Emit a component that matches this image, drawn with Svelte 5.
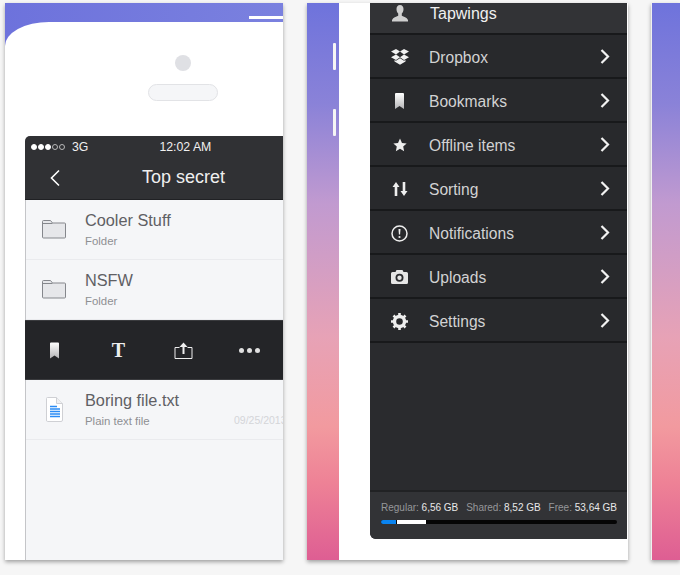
<script lang="ts">
  const files = [
    { name: "Cooler Stuff", kind: "Folder" },
    { name: "NSFW", kind: "Folder" }
  ];

  const menu = ["Dropbox", "Bookmarks", "Offline items", "Sorting", "Notifications", "Uploads", "Settings"];
</script>

{#snippet folder()}
  <svg class="row-icon" width="26" height="22" viewBox="0 0 26 22">
    <path d="M1.500 5V3.500q0-1 1-1h7l2 2.500h12q1 0 1 1v13q0 1-1 1h-21q-1 0-1-1z" fill="#e6e7ea" stroke="#85878c" stroke-width="1"/>
    <path d="M1.500 5.500h10" stroke="#85878c" fill="none"/>
  </svg>
{/snippet}

{#snippet bookmark(w, h)}
  <svg width={w} height={h} viewBox="0 0 9 16">
    <defs>
      <linearGradient id="bm" x1="0" y1="0" x2="0" y2="1">
        <stop offset="0" stop-color="#ffffff"/>
        <stop offset="1" stop-color="#b4b4b6"/>
      </linearGradient>
    </defs>
    <path d="M0 1q0-1 1-1h7q1 0 1 1v15l-4.500-3-4.500 3z" fill="url(#bm)"/>
  </svg>
{/snippet}

{#snippet menuIcon(name)}
  {#if name === "Dropbox"}
    <svg width="18" height="16" viewBox="0 0 18 16" fill="#f1f1f1">
      <path d="M5 0l4 2.600-4 2.800-5-3zM13 0l5 2.400-5 3-4-2.800zM0 8.200l5-2.800 4 2.800-4 2.700zM18 8.200l-5 2.700-4-2.700 4-2.800zM5 11.800l4-2.500 4 2.500 1.500-.8v1.400L9 15.800l-5.500-3.400V11z"/>
    </svg>
  {:else if name === "Bookmarks"}
    {@render bookmark(9, 16)}
  {:else if name === "Offline items"}
    <svg width="14" height="14" viewBox="0 0 24 24" fill="#eeeeee">
      <path d="M12 1l3.400 7.400 8 .9-5.900 5.400 1.600 7.900-7.100-4-7.100 4 1.600-7.900L.6 9.300l8-.9z"/>
    </svg>
  {:else if name === "Sorting"}
    <svg width="16" height="14" viewBox="0 0 16 14" fill="#eeeeee">
      <path d="M4 0l3.500 5H5.300v9H2.700V5H.500zM12 14l-3.500-5h2.200V0h2.600v9h2.200z"/>
    </svg>
  {:else if name === "Notifications"}
    <svg width="17" height="17" viewBox="0 0 17 17">
      <circle cx="8.500" cy="8.500" r="7.500" fill="none" stroke="#eeeeee" stroke-width="1.500"/>
      <path d="M7.500 4h2l-.4 5.500H7.900z" fill="#eeeeee"/>
      <circle cx="8.500" cy="12" r="1.100" fill="#eeeeee"/>
    </svg>
  {:else if name === "Uploads"}
    <svg width="17" height="14" viewBox="0 0 17 14">
      <path d="M1.500 2h3l1-2h6l1 2h3q1.500 0 1.500 1.500V12.500Q17 14 15.500 14h-14Q0 14 0 12.500V3.500Q0 2 1.500 2z" fill="#e6e6e6"/>
      <circle cx="8.500" cy="7.700" r="4" fill="#2a2b2e"/>
      <circle cx="8.500" cy="7.700" r="2.200" fill="#e6e6e6"/>
    </svg>
  {:else}
    <svg width="17" height="17" viewBox="0 0 17 17">
      <circle cx="8.500" cy="8.500" r="5" fill="none" stroke="#eeeeee" stroke-width="3.400"/>
      <path d="M8.500 0v17M0 8.500h17M2.500 2.500l12 12M14.500 2.500l-12 12" stroke="#eeeeee" stroke-width="2.600" stroke-dasharray="2.600 11.800 2.600"/>
    </svg>
  {/if}
{/snippet}

<div class="shots">
  <section class="card first">
    <div class="notch"><span class="notch-bar"></span></div>
    <div class="phone">
      <div class="earpiece">
        <span class="camera"></span>
        <span class="speaker"></span>
      </div>
      <div class="screen">
        <div class="topbar">
          <div class="status">
            <span class="signal">
              <i class="on"></i><i class="on"></i><i class="on"></i><i></i><i></i>
            </span>
            <span class="net">3G</span>
            <span class="clock">12:02 AM</span>
          </div>
          <div class="nav">
            <svg class="back" width="12" height="18" viewBox="0 0 12 18">
              <path d="M10 1.500L2.500 9l7.500 7.500" fill="none" stroke="#ffffff" stroke-width="1.600"/>
            </svg>
            <span class="title">Top secret</span>
          </div>
        </div>

        {#each files as file}
          <div class="row">
            {@render folder()}
            <div class="row-text">
              <span class="row-name">{file.name}</span>
              <span class="row-kind">{file.kind}</span>
            </div>
          </div>
        {/each}

        <div class="actions">
          <span class="action">{@render bookmark(9, 17)}</span>
          <span class="action serif">T</span>
          <span class="action">
            <svg width="19" height="17" viewBox="0 0 19 17" fill="none" stroke="#eeeeee">
              <path d="M5.500 5.500H1v11h17v-11h-4.500" stroke-width="1"/>
              <path d="M9.500 12V2" stroke-width="2"/>
              <path d="M5.500 5l4-4.500 4 4.500z" fill="#eeeeee" stroke="none"/>
            </svg>
          </span>
          <span class="action dots"><i></i><i></i><i></i></span>
        </div>

        <div class="row file">
          <svg class="doc" width="17" height="25" viewBox="0 0 17 25">
            <path d="M1.500.500h9l6 6v16.500q0 1.500-1.500 1.500H1.500Q.500 24.500.500 23V1.500q0-1 1-1z" fill="#ffffff" stroke="#cfd0d4"/>
            <path d="M10.500.500v6h6" fill="#f0f0f2" stroke="#cfd0d4"/>
            <path d="M4 9.500h7M4 12h10M4 14.500h10M4 17h10M4 19.500h10" stroke="#2b8cf5" stroke-width="1.300"/>
          </svg>
          <div class="row-text">
            <span class="row-name">Boring file.txt</span>
            <span class="row-kind">Plain text file</span>
          </div>
          <span class="row-date">09/25/2013</span>
        </div>
      </div>
    </div>
  </section>

  <section class="card second">
    <div class="strip">
      <span class="side-btn"></span>
      <span class="side-btn"></span>
    </div>
    <div class="body">
      <div class="panel">
        <div class="user">
          <span class="menu-icon">
            <svg width="16" height="17" viewBox="0 0 16 17">
              <path d="M8 0c2.300 0 3.500 1.700 3.500 4 0 2-.8 3.600-1.700 4.500v2.300c2 .8 5 1.700 6.200 4.200v1.500H0V15c1.200-2.500 4.200-3.400 6.200-4.200V8.500C5.300 7.600 4.500 6 4.500 4 4.500 1.700 5.700 0 8 0z" fill="#cfcfcf"/>
            </svg>
          </span>
          <span class="user-name">Tapwings</span>
        </div>

        <div class="menu">
          {#each menu as item}
            <div class="menu-row">
              <span class="menu-icon">{@render menuIcon(item)}</span>
              <span class="menu-label">{item}</span>
              <svg class="chevron" width="10" height="15" viewBox="0 0 10 15">
                <path d="M1.500 1l6.500 6.500-6.500 6.500" fill="none" stroke="#f2f2f2" stroke-width="2.200"/>
              </svg>
            </div>
          {/each}
        </div>

        <div class="storage">
          <div class="storage-text">
            <span>Regular: <b>6,56 GB</b></span>
            <span>Shared: <b>8,52 GB</b></span>
            <span>Free: <b>53,64 GB</b></span>
          </div>
          <div class="bar">
            <span class="bar-regular"></span>
            <span class="bar-shared"></span>
          </div>
        </div>
      </div>
    </div>
  </section>

  <section class="card third">
    <div class="strip"></div>
  </section>
</div>

<style>
  :global(body) {
    margin: 0;
    background: #f6f6f6;
  }
  .shots {
    display: flex;
    gap: 24px;
    width: 680px;
    height: 575px;
    box-sizing: border-box;
    padding: 3px 0 0 5px;
    overflow: hidden;
    font-family: "Liberation Sans", Arial, sans-serif;
  }
  .card {
    position: relative;
    flex: none;
    height: 557px;
    background: #ffffff;
    box-shadow: 0 2px 4px rgba(0, 0, 0, 0.35);
  }

  /* first screenshot */
  .first {
    display: flex;
    flex-direction: column;
    width: 278px;
    background: linear-gradient(100deg, #6d72dc, #7f86e0);
  }
  .notch {
    display: flex;
    justify-content: flex-end;
    align-items: flex-end;
    height: 16px;
    flex: none;
  }
  .notch-bar {
    width: 34px;
    height: 3px;
    background: #ffffff;
  }
  .phone {
    flex: 1;
    min-height: 0;
    margin-top: 3px;
    display: flex;
    flex-direction: column;
    background: #ffffff;
    border-top-left-radius: 44px 24px;
    padding-left: 20px;
    box-sizing: border-box;
  }
  .earpiece {
    display: flex;
    flex-direction: column;
    align-items: center;
    gap: 13px;
    padding: 33px 0 0 77px;
    height: 114px;
    box-sizing: border-box;
    width: 278px;
    margin-left: -20px;
    flex: none;
  }
  .camera {
    width: 16px;
    height: 16px;
    border-radius: 50%;
    background: #dfe0e4;
  }
  .speaker {
    width: 70px;
    height: 17px;
    box-sizing: border-box;
    border: 1px solid #e2e3e6;
    border-radius: 9px;
    background: #f5f6f8;
  }
  .screen {
    flex: 1;
    display: flex;
    flex-direction: column;
    background: #f5f6f8;
    border-left: 1px solid #c4c5c8;
    border-top-left-radius: 6px;
    min-height: 0;
  }
  .topbar {
    background: #303134;
    border-top-left-radius: 5px;
    border-bottom: 1px solid #202124;
    height: 63px;
    margin-left: -1px;
    flex: none;
    color: #ffffff;
  }
  .status {
    display: flex;
    align-items: center;
    height: 21px;
    padding-left: 6px;
    font-size: 12.300px;
    color: #f0f0f0;
  }
  .signal {
    display: flex;
    gap: 1px;
  }
  .signal i {
    width: 6px;
    height: 6px;
    box-sizing: border-box;
    border: 1px solid #b8b8b8;
    border-radius: 50%;
  }
  .signal i.on {
    background: #ffffff;
    border-color: #ffffff;
  }
  .net {
    margin-left: 7px;
  }
  .clock {
    margin-left: 71px;
  }
  .nav {
    display: flex;
    align-items: center;
    height: 37px;
    padding-left: 24px;
    margin-top: 2px;
  }
  .back {
    flex: none;
  }
  .title {
    margin-left: 81px;
    font-size: 18px;
    color: #efefef;
  }
  .row {
    display: flex;
    align-items: center;
    height: 60px;
    box-sizing: border-box;
    border-bottom: 1px solid #eaebee;
    padding-left: 16px;
    flex: none;
    position: relative;
    overflow: hidden;
  }
  .row-icon {
    flex: none;
    margin: -2px 18px 0 -1px;
  }
  .row-text {
    display: flex;
    flex-direction: column;
    gap: 4px;
  }
  .row-name {
    font-size: 16.300px;
    line-height: 19px;
    color: #5f6064;
  }
  .row-kind {
    font-size: 11.400px;
    line-height: 14px;
    color: #8e8f93;
  }
  .actions {
    display: flex;
    align-items: center;
    height: 60px;
    flex: none;
    margin-left: -1px;
    background: #242528;
    border-top: 1px solid #3a3b3e;
    border-bottom: 1px solid #3a3b3e;
    box-sizing: border-box;
  }
  .action {
    display: flex;
    justify-content: center;
    align-items: center;
    width: 65px;
    flex: none;
  }
  .action:first-child {
    width: 58px;
  }
  .serif {
    font-family: "Liberation Serif", serif;
    font-weight: 700;
    font-size: 20px;
    color: #eeeeee;
    margin-left: 3px;
  }
  .dots {
    gap: 3px;
    margin-left: 1px;
  }
  .dots i {
    width: 5px;
    height: 5px;
    border-radius: 50%;
    background: #e0e0e0;
  }
  .file {
    padding-left: 20px;
  }
  .doc {
    flex: none;
    margin: 0 22px 0 0;
  }
  .row-date {
    position: absolute;
    left: 208px;
    top: 34px;
    font-size: 10.500px;
    color: #d4d5d8;
    white-space: nowrap;
  }

  /* second screenshot */
  .second {
    display: flex;
    width: 321px;
  }
  .strip {
    flex: none;
    width: 32px;
    height: 100%;
    background: linear-gradient(180deg, #6e73dc 0%, #8a82d8 18%, #c19ad0 36%, #e7a2b6 60%, #f29a9f 76%, #ee8296 86%, #de5e93 100%);
    display: flex;
    flex-direction: column;
    align-items: flex-end;
    gap: 39px;
    padding: 40px 3px 0 0;
    box-sizing: border-box;
  }
  .side-btn {
    width: 3px;
    height: 27px;
    background: #f5f5f5;
    border-radius: 1px;
  }
  .body {
    flex: 1;
    min-width: 0;
    padding: 0 1px 21px 31px;
  }
  .panel {
    display: flex;
    flex-direction: column;
    height: 100%;
    background: #2a2b2e;
    border-bottom-left-radius: 6px;
  }
  .user {
    display: flex;
    align-items: center;
    height: 30px;
    flex: none;
    box-sizing: border-box;
    padding-bottom: 9px;
    background: #323336;
    color: #f0f0f0;
  }
  .menu-icon {
    display: flex;
    justify-content: center;
    align-items: center;
    width: 59px;
    flex: none;
  }
  .user-name {
    font-size: 16px;
    margin-left: 1px;
  }
  .menu {
    flex: 1;
    border-top: 2px solid #18191b;
  }
  .menu-row {
    display: flex;
    align-items: center;
    height: 44px;
    box-sizing: border-box;
    padding-top: 2px;
    border-bottom: 2px solid #18191b;
    background: #28292c;
  }
  .menu-label {
    flex: 1;
    margin-top: 2px;
    font-size: 15.600px;
    color: #d2d2d3;
  }
  .chevron {
    flex: none;
    margin: -2px 17px 0 0;
  }
  .storage {
    flex: none;
    height: 49px;
    box-sizing: border-box;
    border-top: 2px solid #212224;
    background: #323336;
    padding: 9px 10px 0 11px;
    border-bottom-left-radius: 6px;
  }
  .storage-text {
    display: flex;
    justify-content: space-between;
    font-size: 10px;
    line-height: 13px;
    color: #96979a;
    white-space: nowrap;
  }
  .storage-text b {
    font-weight: 400;
    color: #e8e8e8;
  }
  .bar {
    display: flex;
    gap: 1px;
    height: 4px;
    margin-top: 6px;
    background: #050505;
    border-radius: 2px;
    overflow: hidden;
  }
  .bar-regular {
    width: 15px;
    background: #0a84f0;
  }
  .bar-shared {
    width: 29px;
    background: #ffffff;
  }

  /* third screenshot, cut off by the window */
  .third {
    width: 29px;
    margin-left: -1px;
    border-left: 1px solid #f0f0f0;
    box-sizing: border-box;
  }
  .third .strip {
    width: 100%;
    padding: 0;
  }
</style>
